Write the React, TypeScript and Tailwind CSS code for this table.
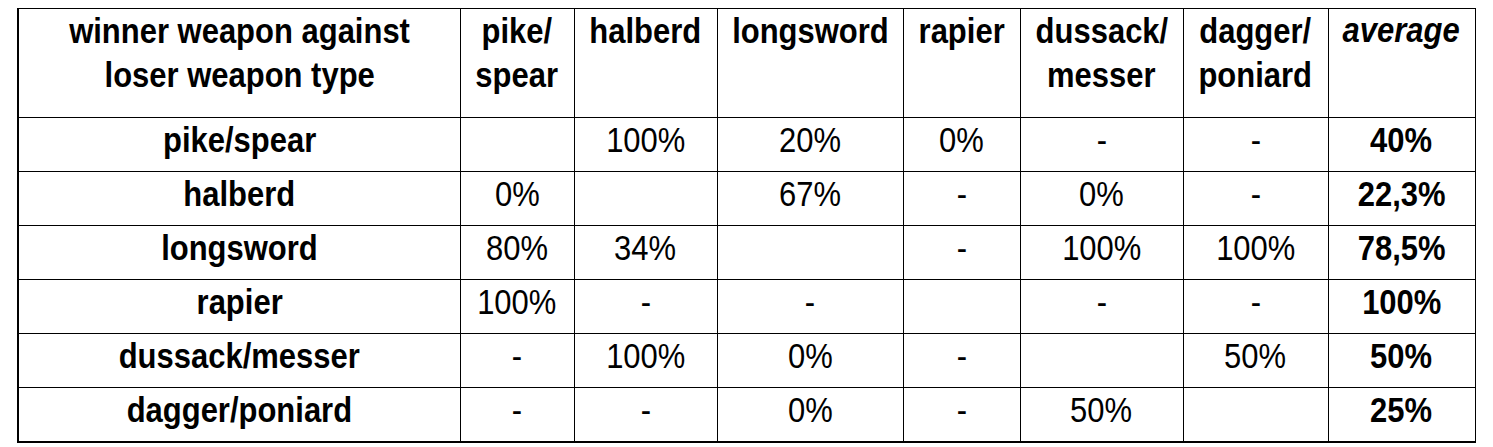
import React from "react";

const cols = [442, 114, 143, 186, 117, 163, 145, 147];

const headers: string[][] = [
  ["winner weapon against", "loser weapon type"],
  ["pike/", "spear"],
  ["halberd"],
  ["longsword"],
  ["rapier"],
  ["dussack/", "messer"],
  ["dagger/", "poniard"],
];

const rows: [string, string[], string][] = [
  ["pike/spear", ["", "100%", "20%", "0%", "-", "-"], "40%"],
  ["halberd", ["0%", "", "67%", "-", "0%", "-"], "22,3%"],
  ["longsword", ["80%", "34%", "", "-", "100%", "100%"], "78,5%"],
  ["rapier", ["100%", "-", "-", "", "-", "-"], "100%"],
  ["dussack/messer", ["-", "100%", "0%", "-", "", "50%"], "50%"],
  ["dagger/poniard", ["-", "-", "0%", "-", "50%", ""], "25%"],
];

function N({ children }: { children: React.ReactNode }) {
  return <span className="inline-block whitespace-nowrap scale-x-[0.885]">{children}</span>;
}

export default function App() {
  return (
    <div
      className="w-[1493px] h-[447px] bg-white pt-[8px] pl-[17px] text-black"
      style={{ fontFamily: "'Liberation Sans', Arial, sans-serif" }}
    >
      <table className="table-fixed w-[1457px] border-collapse border-l-2 border-b-2 border-black text-[35px]">
        <colgroup>
          {cols.map((w, i) => (
            <col key={i} style={{ width: w }} />
          ))}
        </colgroup>
        <thead>
          <tr className="h-[109px]">
            {headers.map((h, i) => (
              <th key={i} className="border border-black align-top text-center font-bold p-0 leading-[44px]">
                {h.map((line, j) => (
                  <div key={j}>
                    <N>{line}</N>
                  </div>
                ))}
              </th>
            ))}
            <th className="border border-black align-top text-center font-bold italic p-0 leading-[44px]">
              <div className="-mt-[1px]">
                <N>average</N>
              </div>
            </th>
          </tr>
        </thead>
        <tbody>
          {rows.map(([label, vals, avg], r) => (
            <tr key={r} className="h-[54px]">
              <td className="border border-black text-center font-bold align-top p-0 pt-[2px] leading-[39px]">
                <N>{label}</N>
              </td>
              {vals.map((v, i) => (
                <td key={i} className="border border-black text-center align-top p-0 pt-[2px] leading-[39px]">
                  <N>{v}</N>
                </td>
              ))}
              <td className="border border-black text-center font-bold align-top p-0 pt-[2px] leading-[39px]">
                <N>{avg}</N>
              </td>
            </tr>
          ))}
        </tbody>
      </table>
    </div>
  );
}
